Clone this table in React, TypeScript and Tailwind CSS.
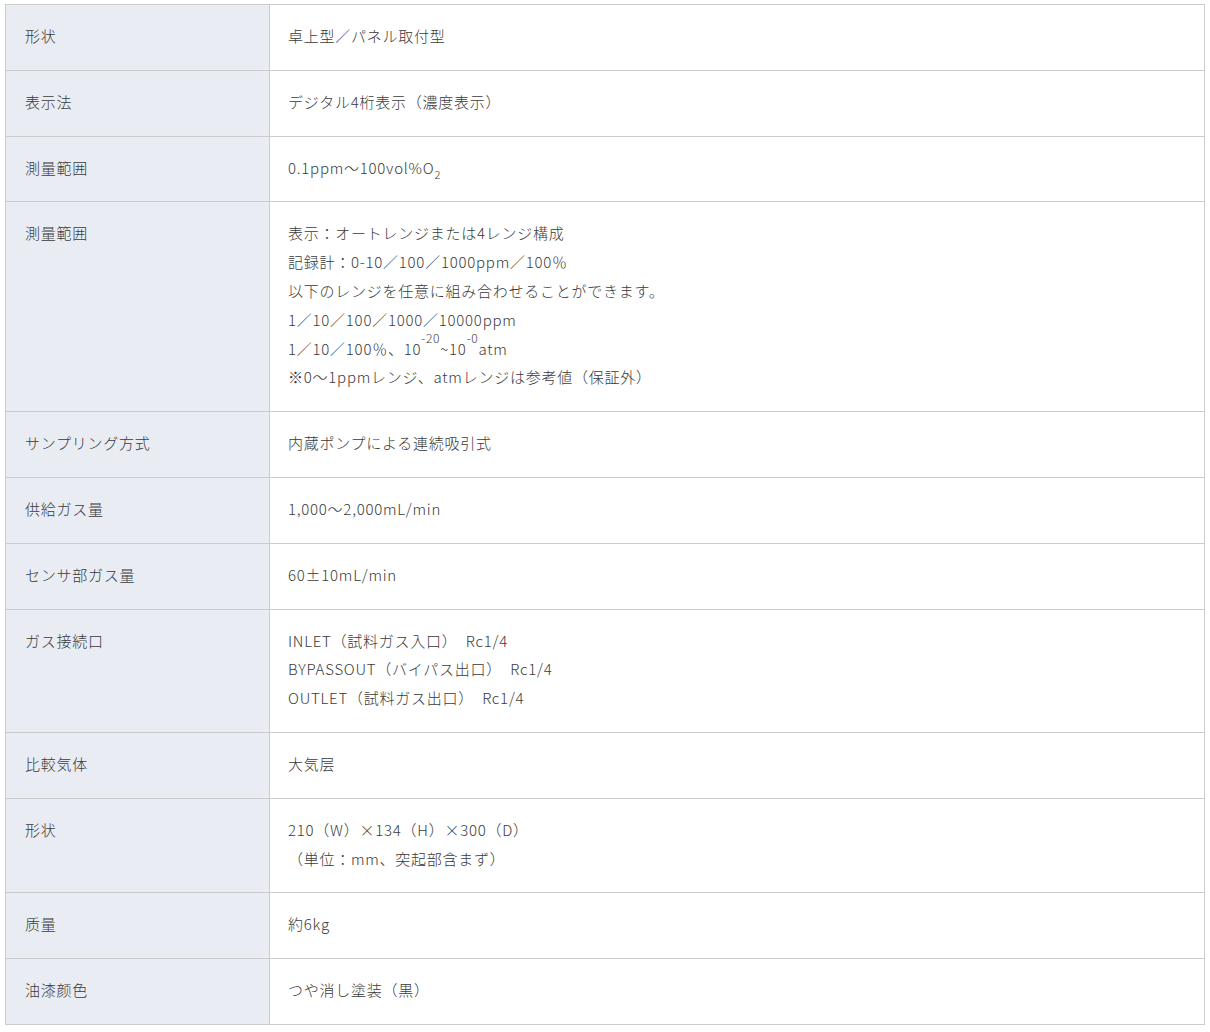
import React from 'react'

type Row = {
  label: string
  lines: React.ReactNode[]
}

const rows: Row[] = [
  { label: '形状', lines: ['卓上型／パネル取付型'] },
  { label: '表示法', lines: ['デジタル4桁表示（濃度表示）'] },
  {
    label: '測量範囲',
    lines: [
      <>
        0.1ppm〜100vol%O<sub className="text-[11px] align-[-3px] leading-none">2</sub>
      </>,
    ],
  },
  {
    label: '測量範囲',
    lines: [
      '表示：オートレンジまたは4レンジ構成',
      '記録計：0-10／100／1000ppm／100％',
      '以下のレンジを任意に組み合わせることができます。',
      '1／10／100／1000／10000ppm',
      <>
        1／10／100％、10<sup className="text-[12px] align-[6px] leading-none">-20</sup>~10
        <sup className="text-[12px] align-[6px] leading-none">-0</sup>atm
      </>,
      '※0〜1ppmレンジ、atmレンジは参考値（保証外）',
    ],
  },
  { label: 'サンプリング方式', lines: ['内蔵ポンプによる連続吸引式'] },
  { label: '供給ガス量', lines: ['1,000〜2,000mL/min'] },
  { label: 'センサ部ガス量', lines: ['60±10mL/min'] },
  {
    label: 'ガス接続口',
    lines: [
      'INLET（試料ガス入口）\u3000Rc1/4',
      'BYPASSOUT（バイパス出口）\u3000Rc1/4',
      'OUTLET（試料ガス出口）\u3000Rc1/4',
    ],
  },
  { label: '比較気体', lines: ['大気层'] },
  {
    label: '形状',
    lines: ['210（W）×134（H）×300（D）', '（単位：mm、突起部含まず）'],
  },
  { label: '质量', lines: ['約6kg'] },
  { label: '油漆颜色', lines: ['つや消し塗装（黒）'] },
]

export default function App() {
  return (
    <div
      className="min-h-[1032px] bg-white pl-[5px] pt-[4px]"
      style={{ fontFamily: '"Noto Sans CJK JP", "Noto Sans", sans-serif' }}
    >
      <table className="w-[1200px] border-collapse border border-[#cccccc] text-[15px] font-light leading-[28.8px] tracking-[0.05em] text-[#3a3a3a]">
        <tbody>
          {rows.map((row, i) => (
            <tr key={i} className="border-b border-[#cccccc]">
              {/* Label */}
              <th className="w-[264px] border-r border-[#cccccc] bg-[#e9ecf3] px-[19px] pt-[17px] pb-[19px] text-left align-top font-light">
                {row.label}
              </th>
              {/* Value */}
              <td className="px-[18px] pt-[17px] pb-[19px] align-top">
                {row.lines.map((line, j) => (
                  <div key={j} className="whitespace-nowrap">
                    {line}
                  </div>
                ))}
              </td>
            </tr>
          ))}
        </tbody>
      </table>
    </div>
  )
}
